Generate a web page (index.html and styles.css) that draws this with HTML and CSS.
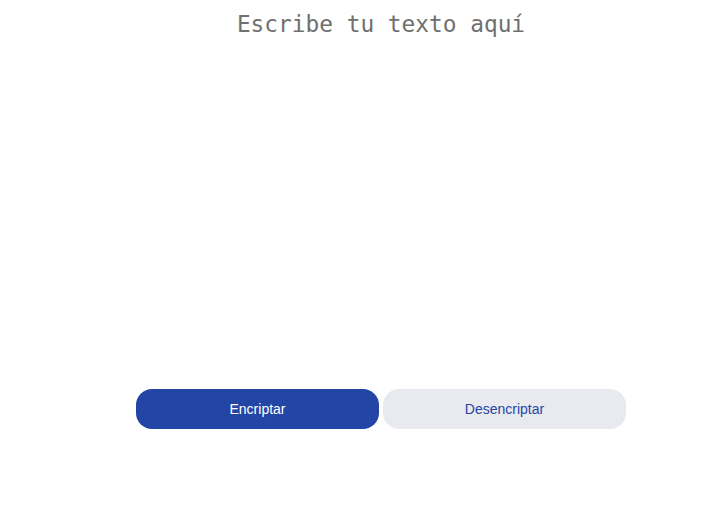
FILE: index.html
```html
<!DOCTYPE html>
<html lang="es">
<head>
<meta charset="utf-8">
<title>Encriptador</title>
<link rel="stylesheet" href="styles.css">
</head>
<body>
<main class="main">
  <section class="editor">
    <textarea class="input" placeholder="Escribe tu texto aquí"></textarea>
    <div class="actions">
      <button class="btn btn-primary" type="button">Encriptar</button>
      <button class="btn btn-secondary" type="button">Desencriptar</button>
    </div>
  </section>
</main>
</body>
</html>
```
FILE: styles.css
```css
html, body {
  margin: 0;
  padding: 0;
  background: #ffffff;
}
.main {
  display: flex;
  padding-left: 136px;
}
.editor {
  width: 490px;
  display: flex;
  flex-direction: column;
}
.input {
  display: block;
  width: 100%;
  height: 389px;
  box-sizing: border-box;
  margin: 0;
  padding: 9px 0 0;
  border: none;
  outline: none;
  resize: none;
  background: transparent;
  font-family: "DejaVu Sans Mono", "Liberation Mono", monospace;
  font-size: 22.8px;
  line-height: 30px;
  text-align: center;
  color: #333;
}
.input::placeholder {
  color: #707070;
  opacity: 1;
}
.actions {
  display: flex;
  gap: 4px;
}
.btn {
  flex: 1;
  height: 40px;
  border: none;
  border-radius: 16px;
  font-family: "Liberation Sans", Arial, sans-serif;
  font-size: 14px;
  cursor: pointer;
}
.btn-primary {
  background: #2346a6;
  color: #ffffff;
}
.btn-secondary {
  background: #e9eaf0;
  color: #2346a6;
}
```
